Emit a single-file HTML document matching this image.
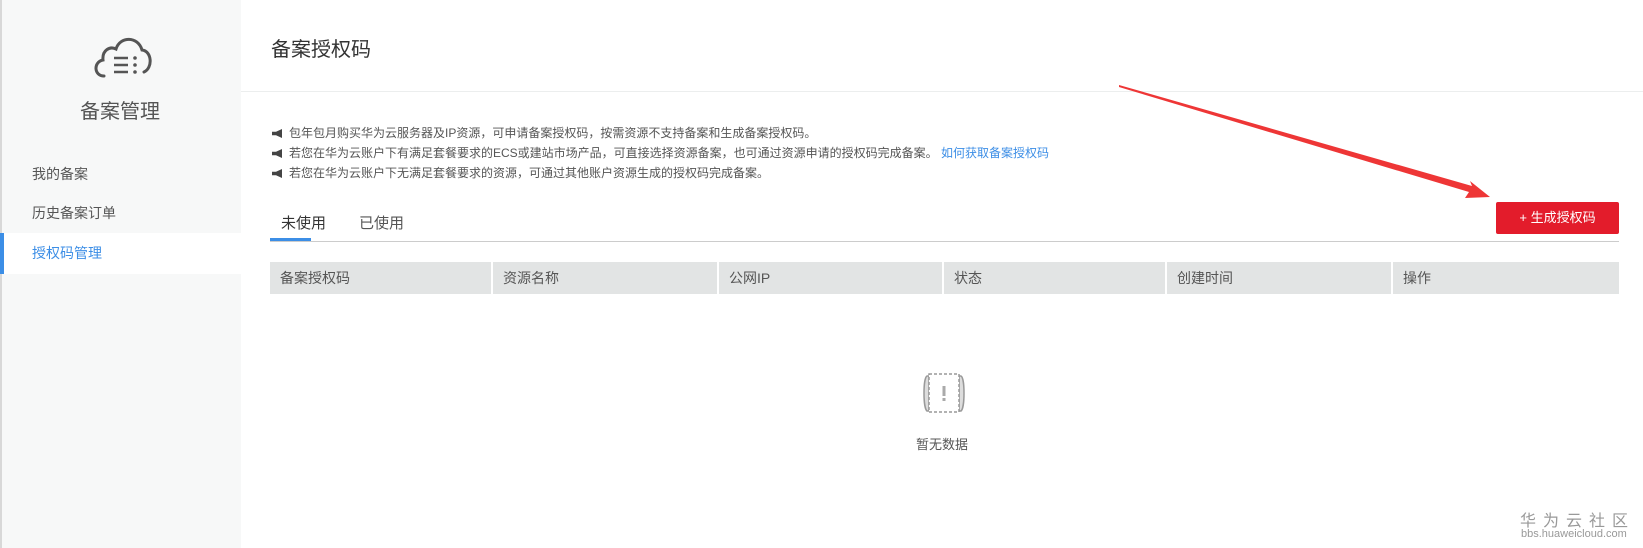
<!DOCTYPE html>
<html><head><meta charset="utf-8"><style>
*{margin:0;padding:0;box-sizing:border-box}
body{width:1643px;height:548px;position:relative;overflow:hidden;background:#fff;font-family:"Liberation Sans","Noto Sans CJK SC",sans-serif;color:#333}
.abs{position:absolute;white-space:nowrap}
#side{position:absolute;left:0;top:0;width:241px;height:548px;background:#f7f8f8;border-left:2px solid #d8d8d8}
.menu{position:absolute;left:30px;font-size:14px;color:#555}
.note{position:absolute;left:272px;font-size:12px;color:#555;white-space:nowrap}
.note:before{content:"";display:inline-block;width:10px;height:9px;background:#444;margin-right:7px;clip-path:polygon(0 30%,40% 30%,100% 0,100% 100%,40% 70%,0 70%);vertical-align:-1px}
.th{position:absolute;top:262px;height:32px;line-height:32px;font-size:14px;color:#555;padding-left:10px;background:#e2e4e4}
</style></head><body>
<div id="side">
<svg class="abs" style="left:88px;top:34px" width="64" height="48" viewBox="0 0 64 48"><path d="M14 42 C4 42 3 28 13 26 C12 16 20 12 26 15 C30 2 48 2 52 16 C62 17 63 34 54 38" fill="none" stroke="#555" stroke-width="3" stroke-linecap="round"/><path d="M24 24h14M24 31h14M24 38h14" stroke="#555" stroke-width="2.5"/><circle cx="45" cy="24" r="1.8" fill="#555"/><circle cx="45" cy="31" r="1.8" fill="#555"/><circle cx="45" cy="38" r="1.8" fill="#555"/></svg>
<div class="abs" style="left:78px;top:95px;font-size:20px;color:#555">备案管理</div>
<div class="menu" style="top:164px">我的备案</div>
<div class="menu" style="top:203px">历史备案订单</div>
<div style="position:absolute;left:-2px;top:233px;width:243px;height:41px;background:#fff;border-left:4px solid #3c8ee6"></div>
<div class="menu" style="top:243px;color:#3c8ee6">授权码管理</div>
</div>
<div class="abs" style="left:271px;top:33px;font-size:20px;color:#333">备案授权码</div>
<div style="position:absolute;left:241px;top:91px;width:1402px;height:1px;background:#eceeee"></div>
<div class="note" style="top:124px">包年包月购买华为云服务器及IP资源，可申请备案授权码，按需资源不支持备案和生成备案授权码。</div>
<div class="note" style="top:144px">若您在华为云账户下有满足套餐要求的ECS或建站市场产品，可直接选择资源备案，也可通过资源申请的授权码完成备案。 <span style="color:#3c8ee6">如何获取备案授权码</span></div>
<div class="note" style="top:164px">若您在华为云账户下无满足套餐要求的资源，可通过其他账户资源生成的授权码完成备案。</div>
<div class="abs" style="left:281px;top:212px;font-size:15px;color:#333">未使用</div>
<div class="abs" style="left:359px;top:212px;font-size:15px;color:#555">已使用</div>
<div style="position:absolute;left:270px;top:241px;width:1349px;height:1px;background:#ccc"></div>
<div style="position:absolute;left:270px;top:238px;width:41px;height:3px;background:#3c8ee6"></div>
<div style="position:absolute;left:1496px;top:202px;width:123px;height:32px;background:#e31c2b;border-radius:2px;color:#fff;font-size:13px;line-height:32px;text-align:center">+ 生成授权码</div>
<div class="th" style="left:270px;width:221px">备案授权码</div>
<div class="th" style="left:493px;width:224px">资源名称</div>
<div class="th" style="left:719px;width:223px">公网IP</div>
<div class="th" style="left:944px;width:221px">状态</div>
<div class="th" style="left:1167px;width:224px">创建时间</div>
<div class="th" style="left:1393px;width:226px">操作</div>
<svg class="abs" style="left:921px;top:372px" width="46" height="42" viewBox="0 0 46 42"><path d="M6 4 C2 6 2 36 6 39 L8 39 L8 4Z M40 4 C44 6 44 36 40 39 L38 39 L38 4Z" fill="#ddd" stroke="#999" stroke-width="1.5"/><rect x="8" y="2" width="30" height="38" fill="#fff" stroke="#999" stroke-width="1.5" stroke-dasharray="3 2"/><rect x="21.5" y="14" width="3" height="10" fill="#aaa"/><rect x="21.5" y="26" width="3" height="3" fill="#aaa"/></svg>
<div class="abs" style="left:916px;top:434px;font-size:13px;color:#555">暂无数据</div>
<svg class="abs" style="left:0;top:0" width="1643" height="548"><polygon points="1119,85 1472,186 1470,181 1490,197 1465,198 1469,192 1119,87" fill="#ee3636"/></svg>
<div class="abs" style="left:1520px;top:507px;font-size:16px;color:#999;letter-spacing:7px">华为云社区</div>
<div class="abs" style="left:1521px;top:528px;font-size:11px;color:#999">bbs.huaweicloud.com</div>
</body></html>
